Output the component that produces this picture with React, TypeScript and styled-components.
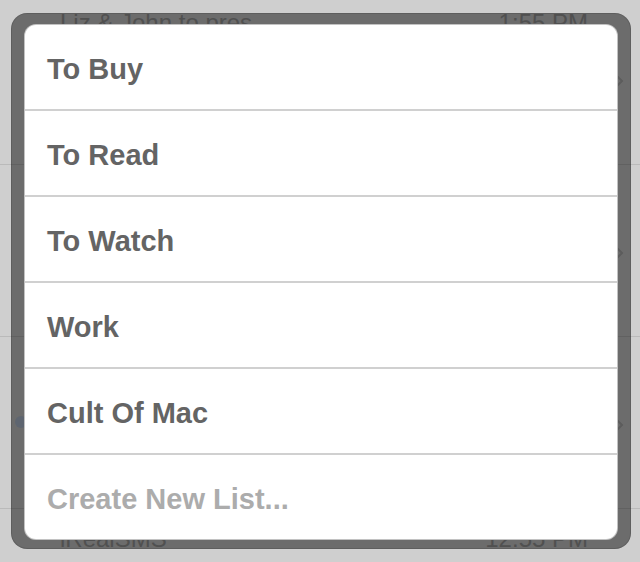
import * as React from 'react';
import styled, { createGlobalStyle } from 'styled-components';

interface Message {
    sender: string;
    time: string;
    unread?: boolean;
}

interface ListItemProps {
    muted?: boolean;
}

const messages: Message[] = [
    { sender: 'Liz & John to pres...', time: '1:55 PM' },
    { sender: '', time: '' },
    { sender: '', time: '', unread: true },
    { sender: 'iRealSMS', time: '12:55 PM' },
];

const lists = ['To Buy', 'To Read', 'To Watch', 'Work', 'Cult Of Mac'];

const Chevron = () => (
    <svg width="8" height="12" viewBox="0 0 8 12">
        <path d="M1.5 1.5 L6 6 L1.5 10.5" fill="none" stroke="#b0b0b0" strokeWidth="2" />
    </svg>
);

export default function App() {
    return (
        <>
            <GlobalStyle />
            <Screen>
                <MessageList>
                    {messages.map((m, i) => (
                        <MessageRow key={i}>
                            {m.unread && <UnreadDot />}
                            <Sender>{m.sender}</Sender>
                            <Time>{m.time}</Time>
                            <ChevronBox>
                                <Chevron />
                            </ChevronBox>
                        </MessageRow>
                    ))}
                </MessageList>

                <Popover>
                    <Panel>
                        {lists.map(name => (
                            <ListItem key={name}>{name}</ListItem>
                        ))}
                        <ListItem muted>Create New List...</ListItem>
                    </Panel>
                </Popover>
            </Screen>
        </>
    );
}


/** styling */

const GlobalStyle = createGlobalStyle`
    body {
        margin: 0;
        background: #cfcfcf;
        font-family: "Liberation Sans", Arial, Helvetica, sans-serif;
    }
`;

const Screen = styled.div`
    position: relative;
    width: 640px;
    height: 562px;
    overflow: hidden;
    background: #cfcfcf;
`;

const MessageList = styled.div`
    display: flex;
    flex-direction: column;
    margin-top: -7px;
`;

const MessageRow = styled.div`
    position: relative;
    display: flex;
    align-items: flex-start;
    height: 172px;
    padding: 18px 0 0 60px;
    box-sizing: border-box;
    border-bottom: 1px solid #bababa;
    flex-shrink: 0;
`;

const Sender = styled.div`
    flex: 1;
    font-size: 24px;
    line-height: 24px;
    color: #9a9a9a;
    white-space: nowrap;
`;

const Time = styled.div`
    font-size: 24px;
    line-height: 24px;
    color: #9a9a9a;
    margin-right: 52px;
`;

const ChevronBox = styled.div`
    position: absolute;
    right: 16px;
    top: 80px;
`;

const UnreadDot = styled.div`
    position: absolute;
    left: 15px;
    top: 79px;
    width: 12px;
    height: 12px;
    border-radius: 50%;
    background: #b4c2d6;
`;

const Popover = styled.div`
    position: absolute;
    left: 11px;
    top: 13px;
    width: 620px;
    height: 536px;
    box-sizing: border-box;
    padding: 12px 14px 10px 14px;
    border-radius: 16px;
    background: rgba(0, 0, 0, 0.48);
    box-shadow: inset 0 0 0 1px rgba(0, 0, 0, 0.12);
`;

const Panel = styled.div`
    display: flex;
    flex-direction: column;
    height: 100%;
    background: #fff;
    border-radius: 11px;
    overflow: hidden;
    box-shadow: 0 0 0 1px #c2c2c2;
`;

const ListItem = styled.div<ListItemProps>`
    display: flex;
    align-items: center;
    height: 86px;
    flex-shrink: 0;
    padding: 5px 0 0 22px;
    box-sizing: border-box;
    font-size: 29px;
    font-weight: bold;
    color: ${props => props.muted ? '#acacac' : '#646464'};
    border-bottom: 2px solid #d0d0d0;

    &:last-child {
        border-bottom: none;
        flex: 1;
    }
`;
